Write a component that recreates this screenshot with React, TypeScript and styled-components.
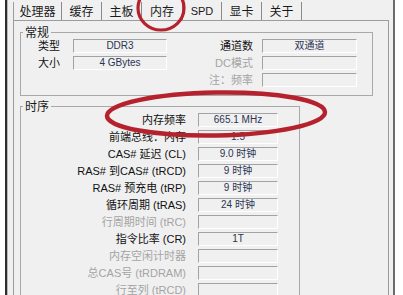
import React from 'react';
import styled, { createGlobalStyle } from 'styled-components';

const Global = createGlobalStyle`
  html, body { margin: 0; padding: 0; background: #ffffff; overflow: hidden; }
  body { width: 403px; height: 295px; font-family: "Liberation Sans", "Noto Sans CJK SC", sans-serif; }
  * { box-sizing: border-box; }
`;

const Page = styled.div`
  position: relative;
  width: 403px;
  height: 295px;
  overflow: hidden;
  padding-left: 5px;
`;

const Frame = styled.div`
  width: 390px;
  height: 100%;
  background: #f0f0f0;
  border-left: 2px solid #2e2e2e;
  border-right: 2px solid #6c6c6c;
  box-shadow: inset 1px 0 0 #b8b8b8;
  padding: 2px 4px 0 6px;
  display: flex;
  flex-direction: column;
`;

const TabStrip = styled.div`
  display: flex;
  height: 18px;
  flex: none;
`;

const Tab = styled.div<{ $w: number }>`
  width: ${p => p.$w}px;
  height: 18px;
  border-right: 1px solid #8a8a8a;
  margin-top: 0;
  padding-top: 2px;
  font-family: "Noto Sans CJK SC", "Liberation Sans", sans-serif;
  font-size: 12px;
  line-height: 14px;
  color: #1a1a1a;
  text-align: center;
  white-space: nowrap;
  &:first-child { border-left: 1px solid #9c9c9c; }
`;

const TabLatin = styled(Tab)`
  font-family: "Liberation Sans", "Noto Sans CJK SC", sans-serif;
  font-size: 11px;
`;

const Panel = styled.div`
  flex: 1;
  border: 1px solid #9c9c9c;
  border-bottom: none;
  padding: 11px 15px 0 6px;
  display: flex;
  flex-direction: column;
  align-items: flex-start;
`;

const Group = styled.div<{ $w: number; $h?: number; $mt?: number }>`
  position: relative;
  width: ${p => p.$w}px;
  ${p => (p.$h ? `height: ${p.$h}px;` : 'flex: 1;')}
  margin-top: ${p => p.$mt ?? 0}px;
  border: 1px solid #a8a8a8;
  border-bottom: ${p => (p.$h ? '1px solid #a8a8a8' : 'none')};
  padding-top: 6px;
`;

const Legend = styled.span`
  position: absolute;
  top: -8px;
  left: 2px;
  padding: 0 2px;
  background: #f0f0f0;
  font-family: "Noto Sans CJK SC", "Liberation Sans", sans-serif;
  font-size: 12px;
  line-height: 14px;
  color: #1a1a1a;
`;

const GeneralGrid = styled.div`
  display: grid;
  grid-template-columns: 52px 94px 95px 95px;
  grid-auto-rows: 14px;
  row-gap: 3px;
`;

const TimingGrid = styled.div`
  display: grid;
  grid-template-columns: 177px 80px;
  grid-auto-rows: 14px;
  row-gap: 3px;
`;

const Label = styled.div<{ $gap: number; $dim?: boolean }>`
  padding-right: ${p => p.$gap}px;
  text-align: right;
  white-space: nowrap;
  font-size: 11px;
  line-height: 14px;
  color: ${p => (p.$dim ? '#a4a4a4' : '#111111')};
`;

const Value = styled.div`
  height: 14px;
  border-top: 1px solid #a2a2a2;
  border-left: 1px solid #a2a2a2;
  border-bottom: 1px solid #ffffff;
  border-right: 1px solid #ffffff;
  background: #f0f0f0;
  font-size: 10px;
  line-height: 12px;
  color: #2a3452;
  text-align: center;
  white-space: nowrap;
  overflow: hidden;
`;

const Empty = styled.div``;

const Overlay = styled.svg`
  position: absolute;
  top: 0;
  left: 0;
  width: 403px;
  height: 295px;
  pointer-events: none;
`;

const tabs: { t: string; w: number; latin?: boolean }[] = [
  { t: '处理器', w: 49 },
  { t: '缓存', w: 40 },
  { t: '主板', w: 40 },
  { t: '内存', w: 41 },
  { t: 'SPD', w: 39, latin: true },
  { t: '显卡', w: 40 },
  { t: '关于', w: 40 },
];

const timings: { l: string; v?: string; dim?: boolean }[] = [
  { l: '内存频率', v: '665.1 MHz' },
  { l: '前端总线：内存', v: '1:5' },
  { l: 'CAS# 延迟 (CL)', v: '9.0 时钟' },
  { l: 'RAS# 到CAS# (tRCD)', v: '9 时钟' },
  { l: 'RAS# 预充电 (tRP)', v: '9 时钟' },
  { l: '循环周期 (tRAS)', v: '24 时钟' },
  { l: '行周期时间 (tRC)', dim: true },
  { l: '指令比率 (CR)', v: '1T' },
  { l: '内存空闲计时器', dim: true },
  { l: '总CAS号 (tRDRAM)', dim: true },
  { l: '行至列 (tRCD)', dim: true },
];

export default function App() {
  return (
    <>
      <Global />
      <Page>
        <Frame>
          <TabStrip>
            {tabs.map(tb =>
              tb.latin ? (
                <TabLatin key={tb.t} $w={tb.w}>{tb.t}</TabLatin>
              ) : (
                <Tab key={tb.t} $w={tb.w}>{tb.t}</Tab>
              )
            )}
          </TabStrip>
          <Panel>
            <Group $w={353} $h={64}>
              <Legend>常规</Legend>
              <GeneralGrid>
                <Label $gap={13}>类型</Label>
                <Value>DDR3</Value>
                <Label $gap={9}>通道数</Label>
                <Value>双通道</Value>

                <Label $gap={13}>大小</Label>
                <Value>4 GBytes</Value>
                <Label $gap={9} $dim>DC模式</Label>
                <Value />

                <Empty />
                <Empty />
                <Label $gap={9} $dim>注：频率</Label>
                <Value />
              </GeneralGrid>
            </Group>
            <Group $w={280} $mt={10}>
              <Legend>时序</Legend>
              <TimingGrid>
                {timings.map(r => (
                  <React.Fragment key={r.l}>
                    <Label $gap={12} $dim={r.dim}>{r.l}</Label>
                    <Value>{r.v ?? ''}</Value>
                  </React.Fragment>
                ))}
              </TimingGrid>
            </Group>
          </Panel>
        </Frame>
        <Overlay viewBox="0 0 403 295">
          <ellipse cx="161" cy="8" rx="23" ry="22" fill="none" stroke="#b5222d" strokeWidth="3.2" />
          <ellipse
            cx="216"
            cy="114"
            rx="109"
            ry="21.5"
            fill="none"
            stroke="#b5222d"
            strokeWidth="4.5"
            transform="rotate(-1 216 114)"
          />
        </Overlay>
      </Page>
    </>
  );
}
